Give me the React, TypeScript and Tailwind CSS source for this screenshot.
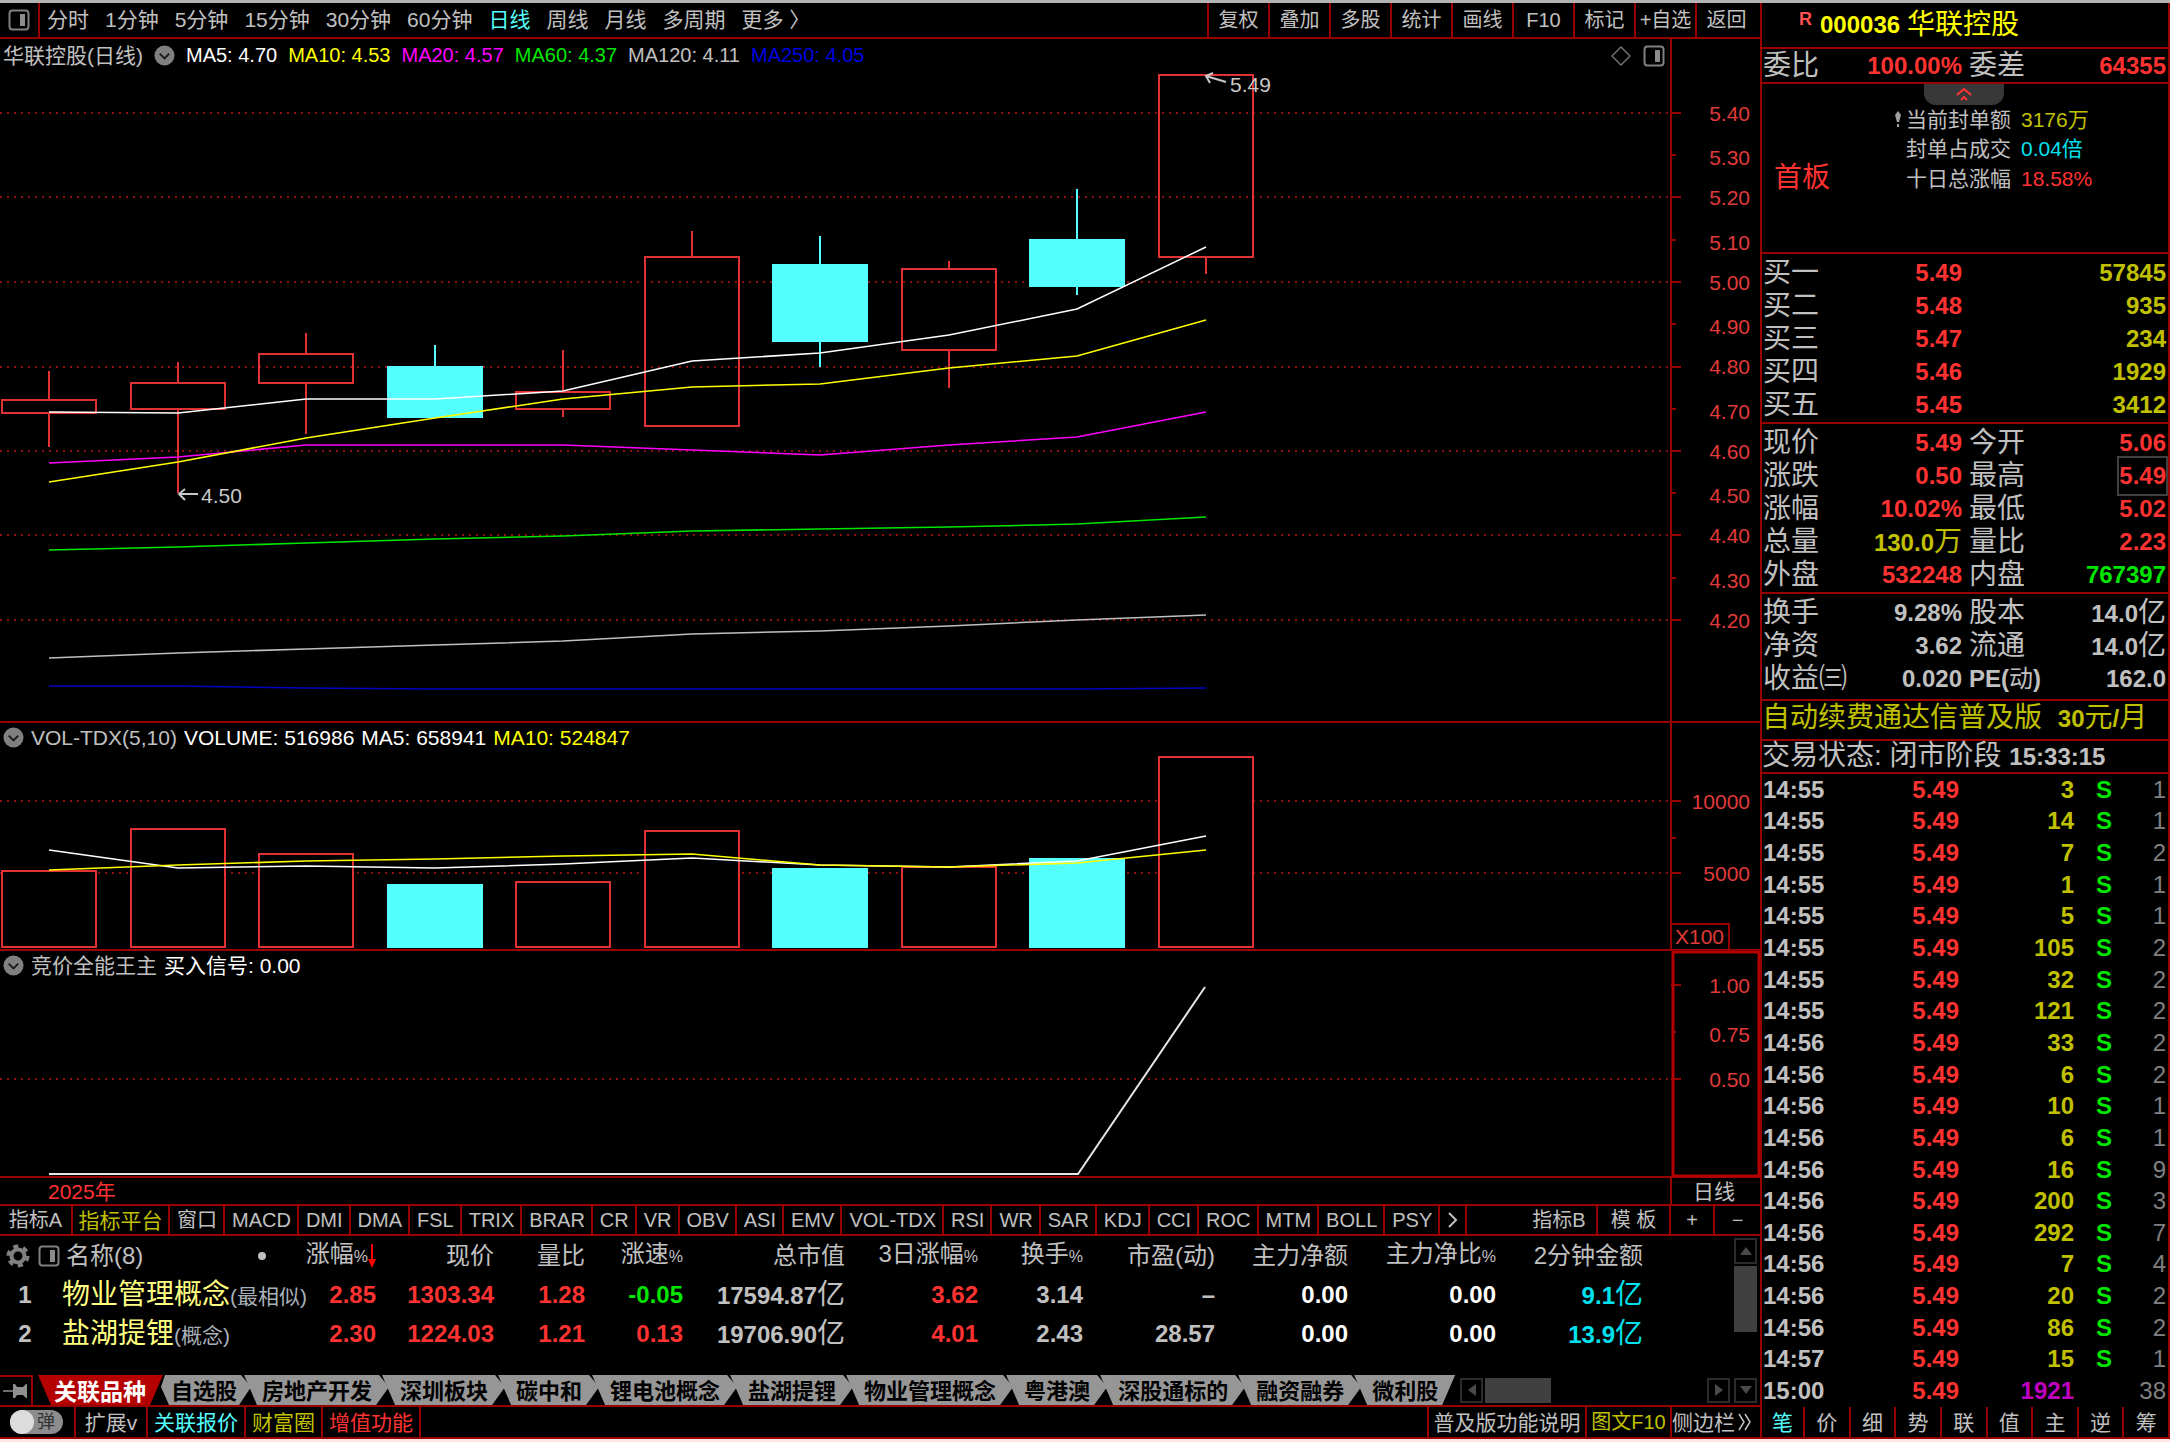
import React from "react";

type Candle = { open: number; close: number; high: number; low: number; vol: number };
type Line = { color: string; values: number[] };

const candles: Candle[] = [
  { open: 4.69, close: 4.72, high: 4.79, low: 4.61, vol: 5140 },
  { open: 4.7, close: 4.76, high: 4.81, low: 4.5, vol: 8056 },
  { open: 4.76, close: 4.83, high: 4.88, low: 4.64, vol: 6320 },
  { open: 4.8, close: 4.68, high: 4.85, low: 4.68, vol: 4200 },
  { open: 4.7, close: 4.74, high: 4.84, low: 4.68, vol: 4375 },
  { open: 4.66, close: 5.06, high: 5.12, low: 4.66, vol: 7917 },
  { open: 5.04, close: 4.86, high: 5.11, low: 4.8, vol: 5278 },
  { open: 4.84, close: 5.03, high: 5.05, low: 4.75, vol: 5450 },
  { open: 5.1, close: 4.99, high: 5.22, low: 4.97, vol: 5940 },
  { open: 5.06, close: 5.49, high: 5.49, low: 5.02, vol: 13055 },
];

const priceLines: Line[] = [
  { color: "#0000c0", values: [4.043, 4.043, 4.038, 4.036, 4.036, 4.036, 4.036, 4.036, 4.036, 4.038] },
  { color: "#c0c0c0", values: [4.11, 4.121, 4.131, 4.142, 4.15, 4.167, 4.175, 4.186, 4.199, 4.212] },
  { color: "#00e600", values: [4.365, 4.373, 4.382, 4.391, 4.399, 4.41, 4.415, 4.421, 4.428, 4.443] },
  { color: "#ff00ff", values: [4.572, 4.586, 4.614, 4.614, 4.614, 4.603, 4.59, 4.615, 4.632, 4.693] },
  { color: "#ffff00", values: [4.526, 4.573, 4.631, 4.678, 4.722, 4.751, 4.759, 4.797, 4.826, 4.911] },
  { color: "#ffffff", values: [4.693, 4.69, 4.722, 4.724, 4.742, 4.812, 4.831, 4.874, 4.936, 5.082] },
];

const volLines: Line[] = [
  { color: "#ffffff", values: [6597, 5368, 5486, 5368, 5604, 6076, 5556, 5451, 5833, 7569] },
  { color: "#ffff00", values: [5208, 5556, 5812, 5951, 6215, 6319, 5556, 5451, 5660, 6597] },
];

const periods = ["分时", "1分钟", "5分钟", "15分钟", "30分钟", "60分钟", "日线", "周线", "月线", "多周期", "更多 〉"];
const tools = ["复权", "叠加", "多股", "统计", "画线", "F10", "标记", "+自选", "返回"];

const indicators = [
  "窗口", "MACD", "DMI", "DMA", "FSL", "TRIX", "BRAR", "CR", "VR", "OBV", "ASI", "EMV",
  "VOL-TDX", "RSI", "WR", "SAR", "KDJ", "CCI", "ROC", "MTM", "BOLL", "PSY",
];

const plates = [
  "房地产开发", "深圳板块", "碳中和", "锂电池概念", "盐湖提锂",
  "物业管理概念", "粤港澳", "深股通标的", "融资融券", "微利股",
];

const bids = [
  ["买一", "5.49", "57845"],
  ["买二", "5.48", "935"],
  ["买三", "5.47", "234"],
  ["买四", "5.46", "1929"],
  ["买五", "5.45", "3412"],
];

const ticks: [string, string, string][] = [
  ["14:55", "3", "1"], ["14:55", "14", "1"], ["14:55", "7", "2"], ["14:55", "1", "1"],
  ["14:55", "5", "1"], ["14:55", "105", "2"], ["14:55", "32", "2"], ["14:55", "121", "2"],
  ["14:56", "33", "2"], ["14:56", "6", "2"], ["14:56", "10", "1"], ["14:56", "6", "1"],
  ["14:56", "16", "9"], ["14:56", "200", "3"], ["14:56", "292", "7"], ["14:56", "7", "4"],
  ["14:56", "20", "2"], ["14:56", "86", "2"], ["14:57", "15", "1"], ["15:00", "1921", "38"],
];

const W = 1760;
const AXIS = 1671;
const LINE = "#990000";
const RED = "#e03a3a";

const xAt = (i: number) => Math.round(49 + i * 128.5);
const priceY = (p: number) => Math.round(282 - (p - 5) * 422.5);
const volY = (v: number) => Math.round(945 - v * 0.0144);

const Polyline = ({ line, y }: { line: Line; y: (v: number) => number }) => (
  <polyline
    points={line.values.map((v, i) => `${xAt(i)},${y(v)}`).join(" ")}
    fill="none"
    stroke={line.color}
    strokeWidth="1.5"
  />
);

const Grid = ({ y }: { y: number }) => (
  <>
    <line x1="0" x2={AXIS} y1={y} y2={y} stroke="#8c0f0f" strokeWidth="2" strokeDasharray="2 5" />
    <line x1={AXIS} x2={AXIS + 10} y1={y} y2={y} stroke={LINE} strokeWidth="2" />
  </>
);

const MinorTick = ({ y }: { y: number }) => (
  <line x1={AXIS} x2={AXIS + 5} y1={y} y2={y} stroke={LINE} strokeWidth="2" />
);

const AxisText = ({ y, children }: { y: number; children: React.ReactNode }) => (
  <text x="1750" y={y + 8} textAnchor="end" fontSize="21" fill={RED}>
    {children}
  </text>
);

const Fold = ({ label }: { label: string }) => (
  <button aria-label={label} className="shrink-0">
    <svg viewBox="0 0 22 22" className="block size-[21px]">
      <circle cx="11" cy="11" r="10.5" fill="#808080" />
      <path d="M6 9l5 5 5-5" fill="none" stroke="#1a1a1a" strokeWidth="2" />
    </svg>
  </button>
);

const PanelIcon = () => (
  <svg viewBox="0 0 22 22" className="block size-[22px]">
    <rect x="1.5" y="1.5" width="19" height="19" rx="3" fill="none" stroke="#808080" strokeWidth="2" />
    <rect x="12" y="5" width="5" height="12" fill="#8c8c8c" />
  </svg>
);

const PriceChart = () => (
  <svg viewBox={`0 39 ${W} 684`} className="block w-full">
    {[5.4, 5.2, 5.0, 4.8, 4.6, 4.4, 4.2].map((p) => (
      <Grid key={p} y={priceY(p)} />
    ))}
    {[5.3, 5.1, 4.9, 4.7, 4.5, 4.3].map((p) => (
      <MinorTick key={p} y={priceY(p)} />
    ))}
    {Array.from({ length: 13 }, (_, i) => 5.4 - i * 0.1).map((p, i) => (
      <AxisText key={i} y={priceY(p) + (i % 2) * 2}>
        {p.toFixed(2)}
      </AxisText>
    ))}
    <g shapeRendering="crispEdges">
      {candles.map((c, i) => {
        const up = c.close > c.open;
        const x = xAt(i);
        const top = priceY(Math.max(c.open, c.close));
        const bottom = priceY(Math.min(c.open, c.close));
        const color = up ? "#e03232" : "#54ffff";
        return (
          <g key={i} stroke={color} strokeWidth="2">
            <line x1={x} x2={x} y1={priceY(c.high)} y2={top} />
            <line x1={x} x2={x} y1={bottom} y2={priceY(c.low)} />
            <rect x={x - 47} y={top} width="94" height={bottom - top} fill={up ? "none" : color} />
          </g>
        );
      })}
    </g>
    {priceLines.map((l) => (
      <Polyline key={l.color} line={l} y={priceY} />
    ))}
    <g stroke="#c8c8c8" strokeWidth="2" fill="none">
      <path d="M198 494H179M185 489l-6 5 6 6" />
      <path d="M1226 82l-20-6M1213 73l-7 3 4 7" />
    </g>
    <g fill="#c8c8c8" fontSize="21">
      <text x="201" y="503">4.50</text>
      <text x="1230" y="92">5.49</text>
    </g>
    <path d={`M${AXIS} 39V722M0 722H${W}`} stroke={LINE} strokeWidth="2" />
  </svg>
);

const VolumeChart = () => (
  <svg viewBox={`0 723 ${W} 228`} className="block w-full">
    <Grid y={801} />
    <MinorTick y={838} />
    <Grid y={873} />
    <AxisText y={801}>10000</AxisText>
    <AxisText y={873}>5000</AxisText>
    <rect x={AXIS} y="924" width="58" height="26" fill="none" stroke={LINE} strokeWidth="2" />
    <text x="1675" y="944" fontSize="21" fill={RED}>X100</text>
    <g shapeRendering="crispEdges">
      {candles.map((c, i) => {
        const up = c.close > c.open;
        return (
          <rect
            key={i}
            x={xAt(i) - 47}
            y={volY(c.vol)}
            width="94"
            height={947 - volY(c.vol)}
            fill={up ? "#000" : "#54ffff"}
            stroke={up ? "#e03232" : "#54ffff"}
            strokeWidth="2"
          />
        );
      })}
    </g>
    {volLines.map((l) => (
      <Polyline key={l.color} line={l} y={volY} />
    ))}
    <path d={`M${AXIS} 723V950M0 950H${W}`} stroke={LINE} strokeWidth="2" />
  </svg>
);

const SignalChart = () => (
  <svg viewBox={`0 951 ${W} 227`} className="block w-full">
    <Grid y={1079} />
    <line x1={AXIS} x2={AXIS + 10} y1="985" y2="985" stroke={LINE} strokeWidth="2" />
    <MinorTick y={1032} />
    <AxisText y={985}>1.00</AxisText>
    <AxisText y={1034}>0.75</AxisText>
    <AxisText y={1079}>0.50</AxisText>
    <path d="M49 1174H1078L1205 987" fill="none" stroke="#e6e6e6" strokeWidth="2" />
    <path d={`M0 1177H${W}`} stroke={LINE} strokeWidth="2" />
    <rect x="1673" y="952" width="86" height="224" fill="none" stroke="#b40000" strokeWidth="3" />
  </svg>
);

const Toolbar = () => (
  <nav className="flex h-9 border-b-2 border-[#990000] text-[21px]">
    <button aria-label="侧栏" className="flex w-10 shrink-0 items-center border-r-2 border-[#990000] pl-2">
      <PanelIcon />
    </button>
    <div className="flex flex-1 items-center gap-4 whitespace-nowrap pl-[7px]">
      {periods.map((p) => (
        <button key={p} className={p === "日线" ? "text-[#54ffff]" : ""}>
          {p}
        </button>
      ))}
    </div>
    <div className="flex">
      {tools.map((t) => (
        <button key={t} className="w-[61px] whitespace-nowrap border-l-2 border-[#990000] text-xl">
          {t}
        </button>
      ))}
      <span className="w-1" />
    </div>
  </nav>
);

const IndicatorBar = () => (
  <div className="flex h-[30px] whitespace-nowrap border-b-2 border-[#990000] text-xl">
    <button className="w-[73px] border-r-2 border-[#990000]">指标A</button>
    <button className="w-[97px] border-r-2 border-[#990000] text-[21px] text-[#c0c000]">指标平台</button>
    {indicators.map((name) => (
      <button key={name} className="border-r-2 border-[#990000] pl-[7px] pr-1.5">
        {name}
      </button>
    ))}
    <button className="w-[27px] border-r-2 border-[#990000]" aria-label="更多指标">
      <svg viewBox="0 0 12 20" className="mx-auto block h-5 w-3">
        <path d="M2 3l7 7-7 7" fill="none" stroke="#c0c0c0" strokeWidth="2" />
      </svg>
    </button>
    <div className="flex-1" />
    <button className="w-[76px] border-r-2 border-[#990000]">指标B</button>
    <button className="w-[73px] border-r-2 border-[#990000]">模 板</button>
    <button className="w-[44px] border-r-2 border-[#990000]">+</button>
    <button className="w-[45px]">−</button>
  </div>
);

const Pct = () => <span className="text-base">%</span>;

const Yi = () => <span className="text-[28px] font-normal">亿</span>;

const plateRows = [
  {
    name: "物业管理概念", tag: "(最相似)", rise: "2.85", price: "1303.34", ratio: "1.28",
    speed: "-0.05", cap: "17594.87", rise3: "3.62", turnover: "3.14", pe: "–", amount: "9.1",
  },
  {
    name: "盐湖提锂", tag: "(概念)", rise: "2.30", price: "1224.03", ratio: "1.21",
    speed: "0.13", cap: "19706.90", rise3: "4.01", turnover: "2.43", pe: "28.57", amount: "13.9",
  },
];

const PlateTable = () => (
  <div className="flex h-[139px] items-start">
    <div className="min-w-0 flex-1">
      <table className="w-full table-fixed whitespace-nowrap text-right text-2xl leading-none">
        <colgroup>
          <col className="w-[50px]" />
          <col className="w-[250px]" />
          <col className="w-[76px]" />
          <col className="w-[118px]" />
          <col className="w-[91px]" />
          <col className="w-[98px]" />
          <col className="w-[162px]" />
          <col className="w-[133px]" />
          <col className="w-[105px]" />
          <col className="w-[132px]" />
          <col className="w-[133px]" />
          <col className="w-[148px]" />
          <col className="w-[147px]" />
          <col />
        </colgroup>
        <thead>
          <tr className="h-[39px] [&>th]:font-normal">
            <th colSpan={2}>
              <div className="flex items-center pl-1.5">
                <button aria-label="设置">
                  <svg viewBox="0 0 24 24" className="block size-6">
                    <circle cx="12" cy="12" r="6.5" fill="none" stroke="#808080" strokeWidth="4" />
                    <circle cx="12" cy="12" r="9.5" fill="none" stroke="#808080" strokeWidth="4" strokeDasharray="5 4.95" />
                  </svg>
                </button>
                <button aria-label="面板" className="ml-2">
                  <PanelIcon />
                </button>
                <span className="ml-1.5">名称(8)</span>
                <span className="ml-auto mr-[34px] size-2 rounded-full bg-[#c0c0c0]" />
              </div>
            </th>
            <th>
              <div className="flex items-baseline justify-end">
                <span>涨幅</span>
                <Pct />
                <svg viewBox="0 0 8 24" className="block h-6 w-2 self-center">
                  <path d="M4 0V20" stroke="#ff0000" strokeWidth="2" />
                  <path d="M0 15h8l-4 9z" fill="#ff0000" />
                </svg>
              </div>
            </th>
            <th>现价</th>
            <th>量比</th>
            <th>涨速<Pct /></th>
            <th>总市值</th>
            <th>3日涨幅<Pct /></th>
            <th>换手<Pct /></th>
            <th>市盈(动)</th>
            <th>主力净额</th>
            <th>主力净比<Pct /></th>
            <th>2分钟金额</th>
            <th />
          </tr>
        </thead>
        <tbody>
          {plateRows.map((r, i) => (
            <tr key={r.name} className="h-[39px] font-bold">
              <td className="text-center">{i + 1}</td>
              <td className="pl-3 text-left text-[28px] font-normal text-[#ffff80]">
                {r.name}
                <span className="text-[21px] text-[#a8b0b8]">{r.tag}</span>
              </td>
              <td className="text-[#ff3232]">{r.rise}</td>
              <td className="text-[#ff3232]">{r.price}</td>
              <td className="text-[#ff3232]">{r.ratio}</td>
              <td className={r.speed.startsWith("-") ? "text-[#00e600]" : "text-[#ff3232]"}>{r.speed}</td>
              <td>{r.cap}<Yi /></td>
              <td className="text-[#ff3232]">{r.rise3}</td>
              <td>{r.turnover}</td>
              <td>{r.pe}</td>
              <td className="text-white">0.00</td>
              <td className="text-white">0.00</td>
              <td className="text-[#00e1f0]">{r.amount}<Yi /></td>
              <td />
            </tr>
          ))}
        </tbody>
      </table>
    </div>
    <div className="flex w-[26px] flex-col gap-0.5 pr-[3px] pt-0.5">
      <button aria-label="向上" className="flex h-[26px] items-center justify-center border-2 border-[#2b2b2b]">
        <svg viewBox="0 0 12 8" className="block h-2 w-3"><path d="M6 0l6 8H0z" fill="#4a4a4a" /></svg>
      </button>
      <div className="h-[66px] bg-[#404040]" />
    </div>
  </div>
);

const PlateTabs = () => (
  <div className="flex h-8 border-b-2 border-[#990000]">
    <button aria-label="固定" className="mr-[5px] flex w-[33px] shrink-0 items-center border-r-2 border-t-2 border-[#990000] pl-[3px]">
      <svg viewBox="0 0 25 16" className="block h-4 w-[25px]">
        <path d="M0 8h10" stroke="#909090" strokeWidth="1.5" fill="none" />
        <path d="M10 1h2l2 3h6l3-3h1v14h-1l-3-3h-6l-2 3h-2z" fill="#909090" />
      </svg>
    </button>
    <div className="flex whitespace-nowrap text-[22px] font-bold text-black">
      <button className="bg-[#b40000] pl-4 pr-[17px] text-[23px] text-white [clip-path:polygon(0_0,100%_0,calc(100%-13px)_100%,13px_100%)]">
        关联品种
      </button>
      <button className="-ml-0.5 bg-[#969696] pl-2.5 pr-3.5 [clip-path:polygon(4px_0,calc(100%-10px)_0,100%_40%,calc(100%-12px)_100%,8px_100%,0_40%)]">
        自选股
      </button>
      {plates.map((p) => (
        <button
          key={p}
          className="-ml-[7px] bg-[#969696] pl-[18px] pr-[17px] [clip-path:polygon(0_0,calc(100%-10px)_0,100%_40%,calc(100%-13px)_100%,13px_100%)] last:[clip-path:polygon(0_0,100%_0,calc(100%-13px)_100%,13px_100%)]"
        >
          {p}
        </button>
      ))}
    </div>
    <div className="flex flex-1 items-center gap-0.5 pl-[5px] pr-[3px]">
      <button aria-label="向左" className="flex h-[25px] w-[23px] items-center justify-center border-2 border-[#2b2b2b]">
        <svg viewBox="0 0 8 12" className="block h-3 w-2"><path d="M0 6l8-6v12z" fill="#4a4a4a" /></svg>
      </button>
      <div className="h-[25px] w-[66px] bg-[#404040]" />
      <div className="flex-1" />
      <button aria-label="向右" className="flex h-[25px] w-[23px] items-center justify-center border-2 border-[#2b2b2b]">
        <svg viewBox="0 0 8 12" className="block h-3 w-2"><path d="M8 6l-8-6v12z" fill="#4a4a4a" /></svg>
      </button>
      <button aria-label="向下" className="ml-0.5 flex h-[25px] w-[23px] items-center justify-center border-2 border-[#2b2b2b]">
        <svg viewBox="0 0 12 8" className="block h-2 w-3"><path d="M6 8l6-8H0z" fill="#4a4a4a" /></svg>
      </button>
    </div>
  </div>
);

interface QuoteRowProps {
  label: React.ReactNode;
  value: React.ReactNode;
  label2?: React.ReactNode;
  value2: React.ReactNode;
  tone?: string;
  tone2?: string;
}

const QuoteRow = ({ label, value, label2, value2, tone = "", tone2 = "" }: QuoteRowProps) => (
  <div className="flex h-[33px] items-center whitespace-nowrap pl-px pr-[2px] text-[28px] leading-none">
    <span className="w-[84px]">{label}</span>
    <span className={`flex-1 text-right text-2xl font-bold ${tone}`}>{value}</span>
    <span className="w-[84px] pl-[7px]">{label2}</span>
    <span className={`w-[120px] text-right text-2xl font-bold ${tone2}`}>{value2}</span>
  </div>
);

const Sidebar = () => (
  <aside className="flex w-[410px] shrink-0 flex-col border-x-2 border-[#990000]">
    <h1 className="flex h-[46px] items-center border-b-2 border-[#990000] pl-[37px] text-[28px] leading-none text-[#ffff00]">
      <span className="mr-2 self-start pt-[7px] text-lg font-bold leading-none text-[#ff5050]">R</span>
      <span className="mr-[7px] text-2xl font-bold">000036</span>
      华联控股
    </h1>
    <div className="h-[35px] border-b-2 border-[#990000]">
      <QuoteRow label="委比" value="100.00%" label2="委差" value2="64355" tone="text-[#ff3232]" tone2="text-[#ff3232]" />
    </div>
    <div className="relative flex h-[170px] border-b-2 border-[#990000] text-[21px] leading-none">
      <button aria-label="收起" className="absolute left-[162px] top-0 flex h-[21px] w-20 justify-center rounded-b-xl bg-[#383838] pt-1">
        <svg viewBox="0 0 16 13" className="block h-[13px] w-4">
          <path d="M1 7l7-6 7 6M5 12l3-3 3 3" fill="none" stroke="#ff3232" strokeWidth="2" />
        </svg>
      </button>
      <strong className="w-[132px] pl-3 pt-20 text-[28px] font-normal text-[#ff3232]">首板</strong>
      <svg viewBox="0 0 8 18" className="mt-[27px] block h-[18px] w-2">
        <path d="M4 0l3 4-2 7H3L1 4z" fill="#a0a0a0" />
        <rect x="3" y="13" width="2" height="3" fill="#a0a0a0" />
      </svg>
      <dl className="mt-[21px] grid h-[88px] grid-cols-[115px_auto] items-center whitespace-nowrap pl-1">
        <dt>当前封单额</dt>
        <dd className="text-[#c0c000]">3176万</dd>
        <dt>封单占成交</dt>
        <dd className="text-[#00e1f0]">0.04倍</dd>
        <dt>十日总涨幅</dt>
        <dd className="text-[#ff3232]">18.58%</dd>
      </dl>
    </div>
    <div className="h-[170px] border-b-2 border-[#990000] pt-[2px]">
      {bids.map(([label, price, vol]) => (
        <QuoteRow key={label} label={label} value={price} value2={vol} tone="text-[#ff3232]" tone2="text-[#c0c000]" />
      ))}
    </div>
    <div className="h-[170px] border-b-2 border-[#990000] pt-[2px]">
      <QuoteRow label="现价" value="5.49" label2="今开" value2="5.06" tone="text-[#ff3232]" tone2="text-[#ff3232]" />
      <QuoteRow
        label="涨跌"
        value="0.50"
        label2="最高"
        value2={<span className="inline-block py-[2px] outline-2 outline-[#404040]">5.49</span>}
        tone="text-[#ff3232]"
        tone2="text-[#ff3232]"
      />
      <QuoteRow label="涨幅" value="10.02%" label2="最低" value2="5.02" tone="text-[#ff3232]" tone2="text-[#ff3232]" />
      <QuoteRow
        label="总量"
        value={<>130.0<span className="text-[28px] font-normal">万</span></>}
        label2="量比"
        value2="2.23"
        tone="text-[#c0c000]"
        tone2="text-[#ff3232]"
      />
      <QuoteRow label="外盘" value="532248" label2="内盘" value2="767397" tone="text-[#ff3232]" tone2="text-[#00e600]" />
    </div>
    <div className="h-[107px] border-b-2 border-[#990000] pt-[2px]">
      <QuoteRow label="换手" value="9.28%" label2="股本" value2={<>14.0<Yi /></>} />
      <QuoteRow label="净资" value="3.62" label2="流通" value2={<>14.0<Yi /></>} />
      <QuoteRow
        label="收益㈢"
        value="0.020"
        label2={<span className="text-2xl"><b>PE(</b>动<b>)</b></span>}
        value2="162.0"
      />
    </div>
    <a href="#renew" className="block h-10 whitespace-nowrap border-b-2 border-[#990000] text-[28px] leading-[34px] text-[#c0c000]">
      自动续费通达信普及版 <b className="ml-2 text-2xl">30</b>元<b className="text-2xl">/</b>月
    </a>
    <div className="h-[33px] whitespace-nowrap border-b-2 border-[#990000] text-[28px] leading-[29px]">
      交易状态: 闭市阶段 <b className="text-2xl">15:33:15</b>
    </div>
    <div className="flex flex-1">
      <table className="flex-1 table-fixed text-right text-2xl font-bold leading-none">
        <colgroup>
          <col className="w-[90px]" />
          <col />
          <col className="w-[115px]" />
          <col className="w-[38px]" />
          <col className="w-[56px]" />
        </colgroup>
        <tbody>
          {ticks.map(([time, vol, count], i) => (
            <tr key={i}>
              <td className="pl-px text-left">{time}</td>
              <td className="text-[#ff3232]">5.49</td>
              <td className={vol === "1921" ? "text-[#c000c0]" : "text-[#c0c000]"}>{vol}</td>
              <td className="text-[#00e600]">{vol === "1921" ? "" : "S"}</td>
              <td className="pr-[2px] font-normal text-[#808080]">{count}</td>
            </tr>
          ))}
        </tbody>
      </table>
    </div>
  </aside>
);

const Footer = () => (
  <footer className="flex h-8 whitespace-nowrap border-b-2 border-[#990000] text-[21px] leading-none">
    <label className="flex w-[76px] items-center border-r-2 border-[#990000] pl-2.5">
      <input type="checkbox" aria-label="弹" className="peer sr-only" />
      <span className="flex h-6 w-[53px] items-center justify-between rounded-full bg-[#8c8c8c] pr-2 text-lg text-[#303030]">
        <i className="size-6 rounded-full bg-[#dcdcdc]" />
        弹
      </span>
    </label>
    <button className="w-[72px] border-r-2 border-[#990000]">扩展v</button>
    <button className="w-[98px] border-r-2 border-[#990000] text-[#54ffff]">关联报价</button>
    <button className="w-[77px] border-r-2 border-[#990000] text-[#c0c000]">财富圈</button>
    <button className="w-[98px] border-r-2 border-[#990000] text-[#ff3232]">增值功能</button>
    <div className="flex-1" />
    <button className="w-[158px] border-l-2 border-[#990000]">普及版功能说明</button>
    <button className="w-[85px] border-l-2 border-[#990000] text-xl text-[#c0c000]">图文F10</button>
    <button className="flex w-[90px] items-center justify-between border-l-2 border-[#990000] pr-2">
      侧边栏
      <svg viewBox="0 0 14 20" className="block h-5 w-3.5">
        <path d="M1 2l5 8-5 8M7 2l5 8-5 8" fill="none" stroke="#c0c0c0" strokeWidth="1.5" />
      </svg>
    </button>
    <div className="flex w-[410px]">
      {[..."笔价细势联值主逆筹"].map((t) => (
        <button key={t} className={`border-l-2 border-[#990000] ${t === "笔" ? "w-[43px] text-[#54ffff]" : "flex-1"}`}>
          {t}
        </button>
      ))}
      <span className="w-0.5 bg-[#990000]" />
    </div>
  </footer>
);

const App: React.FC = () => {
  return (
    <div className="bg-black font-['Liberation_Sans','Noto_Sans_CJK_SC',sans-serif] text-[#c0c0c0]">
      <div className="h-[3px] bg-[#b4b4b4]" />
      <div className="flex">
        <main className="min-w-0 flex-1">
          <Toolbar />

          {/* K线 */}
          <section className="relative">
            <PriceChart />
            <div className="absolute left-[3px] top-0 flex h-8 items-center gap-[11px] whitespace-nowrap text-xl leading-none">
              <span className="text-[21px]">华联控股(日线)</span>
              <Fold label="折叠主图" />
              <span className="text-white">MA5: 4.70</span>
              <span className="text-[#ffff00]">MA10: 4.53</span>
              <span className="text-[#ff00ff]">MA20: 4.57</span>
              <span className="text-[#00e600]">MA60: 4.37</span>
              <span>MA120: 4.11</span>
              <span className="text-[#0000e0]">MA250: 4.05</span>
            </div>
            <div className="absolute right-[95px] top-0 flex h-[34px] items-center gap-3">
              <svg viewBox="0 0 20 20" className="block size-5">
                <path d="M10 1l9 9-9 9-9-9z" fill="none" stroke="#707070" strokeWidth="1.5" />
              </svg>
              <PanelIcon />
            </div>
          </section>

          {/* 成交量 */}
          <section className="relative">
            <VolumeChart />
            <div className="absolute left-[3px] top-0 flex h-7 items-center gap-[7px] whitespace-nowrap text-[21px] leading-none">
              <Fold label="折叠成交量" />
              <span>VOL-TDX(5,10)</span>
              <span className="text-white">VOLUME: 516986</span>
              <span className="text-white">MA5: 658941</span>
              <span className="text-[#ffff00]">MA10: 524847</span>
            </div>
          </section>

          <section className="relative">
            <SignalChart />
            <div className="absolute left-[3px] top-0 flex h-7 items-center gap-[7px] whitespace-nowrap text-[21px] leading-none">
              <Fold label="折叠指标" />
              <span>竞价全能王主</span>
              <span className="text-white">买入信号: 0.00</span>
            </div>
          </section>

          <div className="flex h-7 items-center border-b-2 border-[#990000] text-[21px] leading-none">
            <span className="flex-1 pl-12 text-[#ff3232]">2025年</span>
            <span className="flex h-full w-[90px] items-center justify-center border-l-2 border-[#990000] pr-1">日线</span>
          </div>
          <IndicatorBar />
          <PlateTable />
          <PlateTabs />
        </main>
        <Sidebar />
      </div>
      <Footer />
      <div className="h-[3px] bg-[#ffe4e4]" />
    </div>
  );
};

export default App;
